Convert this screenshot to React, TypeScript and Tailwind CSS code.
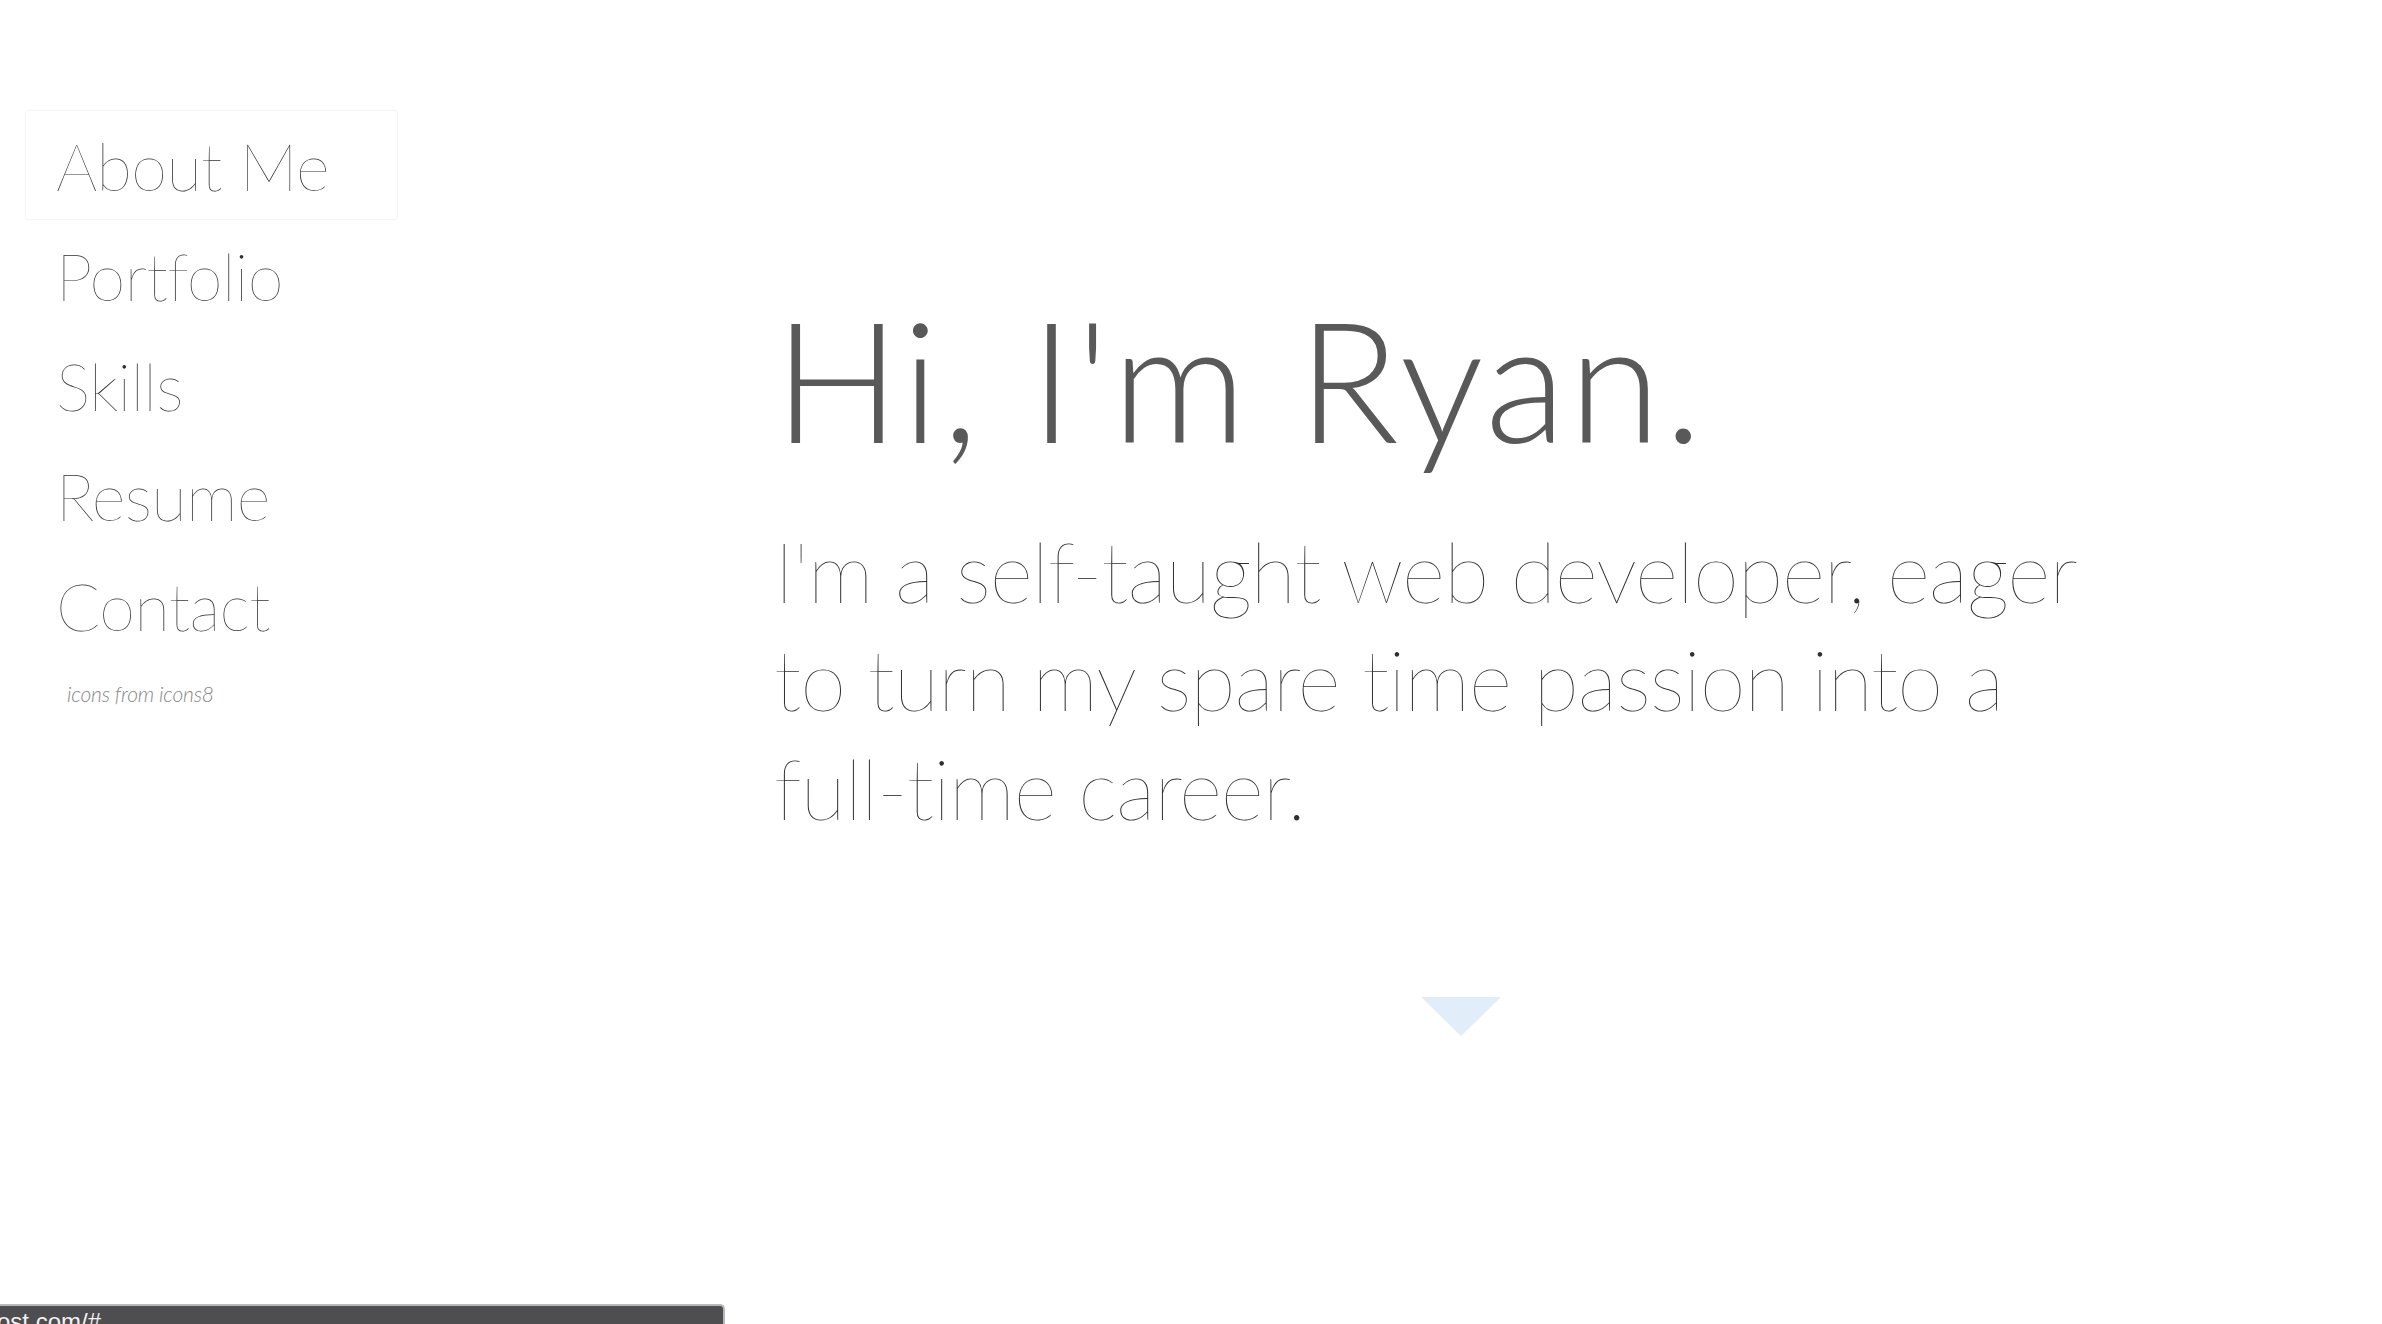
import React from "react";

const navItems = ["About Me", "Portfolio", "Skills", "Resume", "Contact"];

export default function App() {
  const active = "About Me";

  return (
    <div className="relative min-h-screen w-full overflow-hidden bg-white font-['Lato',sans-serif]">
      <div className="flex min-h-screen">
        {/* Sidebar */}
        <aside className="w-[540px] shrink-0 pl-[25px] pt-[110px]">
          <nav className="w-[373px]">
            {navItems.map((item) => (
              <a
                key={item}
                href="#"
                className={`block h-[110px] rounded-[3px] pl-[30px] text-[65px] font-extralight leading-[110px] tracking-[-0.6px] text-[#2f2f2f] ${
                  item === active ? "border border-[#f6f6f6]" : "border border-transparent"
                }`}
              >
                {item}
              </a>
            ))}
          </nav>
          <p className="mt-[20px] pl-[42px] text-[21px] font-light italic leading-[28px] tracking-[-0.2px] text-[#888]">
            icons from icons8
          </p>
        </aside>

        {/* Main */}
        <main className="flex flex-1 flex-col pt-[279px]">
          <div className="pl-[234px]">
            <h1 className="text-[167px] font-light leading-[200px] tracking-[3px] text-[#595959]">
              Hi, I'm Ryan.
            </h1>
            <p className="mt-[38px] max-w-[1340px] text-[83.4px] font-extralight leading-[108.4px] tracking-[-1.15px] text-[#2f2f2f]">
              I'm a self-taught web developer, eager to turn my spare time passion into a full-time career.
            </p>
          </div>
          <div className="mt-[155px] h-0 w-0 self-center border-t-[39px] border-r-[40px] border-l-[40px] border-t-[#e1edf9] border-r-transparent border-l-transparent" />
        </main>
      </div>

      {/* Browser status bubble */}
      <div className="absolute bottom-0 left-0 h-[20px] w-[725px] overflow-hidden rounded-tr-[5px] border-t-2 border-r-2 border-[#b8b8b8] bg-[#4e4d4f]">
        <span className="-ml-[3px] block pt-[2px] font-['Liberation_Sans',sans-serif] text-[24px] leading-[28px] text-[#f2f2f2]">
          ost.com/#
        </span>
      </div>
    </div>
  );
}
